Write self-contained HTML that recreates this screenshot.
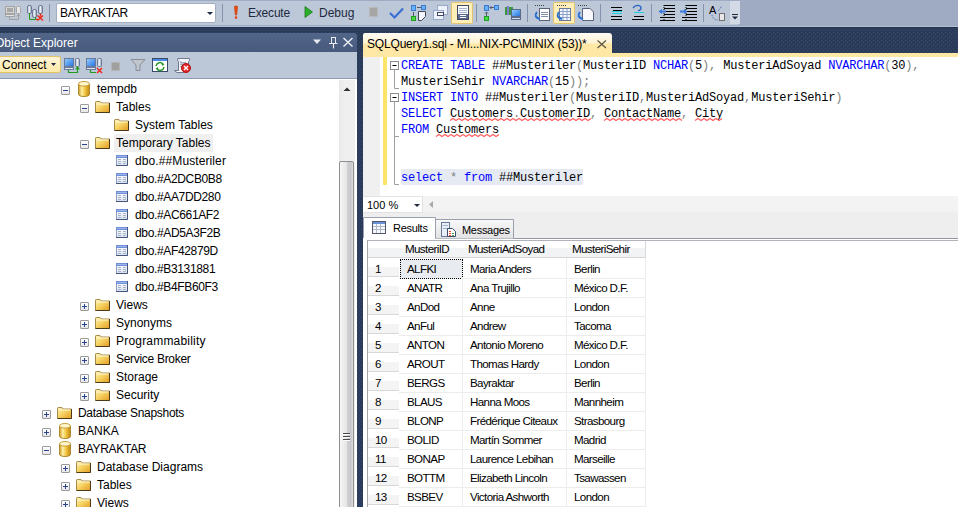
<!DOCTYPE html>
<html><head><meta charset="utf-8">
<style>
*{margin:0;padding:0;box-sizing:border-box}
html,body{width:958px;height:507px;overflow:hidden;background:#2a3b5a;font-family:"Liberation Sans",sans-serif;font-size:12px;color:#000}
.a{position:absolute}
#bg{left:0;top:27px;width:958px;height:480px;background-color:#2a3b5a;border-top:1px solid #23324e}
#tray{left:0;top:0;width:958px;height:27px;background:#9eabc2;border-bottom:1px solid #b3bfd3}
#tb{left:0;top:1px;width:740px;height:24px;background:#bcc7d8;border-radius:0 3px 3px 0}
.sep{position:absolute;width:1px;background:#8592ab;top:4px;height:18px}
.t{position:absolute;white-space:pre;line-height:14px}
/* object explorer */
#oe{left:0;top:52px;width:357px;height:455px;background:#fff}
#oetitle{left:0;top:33px;width:357px;height:19px;background:linear-gradient(#52668a,#475a7c);border-radius:0 3px 0 0;color:#fff}
#oetb{left:0;top:52px;width:357px;height:27px;background:#bcc7d8;border-bottom:1px solid #8e9bb3}
#tree{left:0;top:79px;width:355px;height:428px;background:#fff;overflow:hidden}
.row{position:absolute;height:18px;left:0;width:339px}
.exp{position:absolute;width:9px;height:9px;border:1px solid #9a9a9a;border-radius:1px;background:linear-gradient(#fff,#e6e6e6);top:5px}
.exp i{position:absolute;left:1px;top:3px;width:5px;height:1px;background:#2a4490}
.exp b{position:absolute;left:3px;top:1px;width:1px;height:5px;background:#2a4490}
.lbl{position:absolute;top:0;line-height:18px;white-space:pre}
#sb{left:339px;top:80px;width:16px;height:427px;background:linear-gradient(90deg,#e8e8e8,#f0f0f0 40%,#eeeeee)}
#thumb{left:339px;top:161px;width:15px;height:360px;border:1px solid #8f8f8f;border-radius:2px;background:linear-gradient(90deg,#f6f6f6,#e6e6e6 50%,#d2d2d6 51%,#c8c8cc 85%,#e0e0e0)}
/* document */
#tab{left:363px;top:33px;width:249px;height:20px;border-radius:2px 3px 0 0;background:linear-gradient(#fffcf4 0,#fff3d2 50%,#ffe8a6 55%,#ffe8a6 100%)}
#strip{left:363px;top:53px;width:595px;height:4px;background:#ffe8a6}
#ed{left:363px;top:57px;width:595px;height:139px;background:#fff}
#margin{left:363px;top:57px;width:17px;height:139px;background:#f0f0f0}
#chg{left:383px;top:57px;width:4px;height:128px;background:#ffe566}
.code{position:absolute;left:401px;font-family:"Liberation Mono",monospace;font-size:12px;letter-spacing:-0.2px;line-height:16px;white-space:pre;color:#000}
.k{color:#0000ff}.g{color:#808080}
#zoombar{left:363px;top:196px;width:595px;height:42px;background:linear-gradient(#f4f4f4 0,#f2f2f2 16px,#eeeeee 17px,#eeeeee 100%)}
#res{left:363px;top:238px;width:595px;height:269px;background:#fff}
.hdr{background:linear-gradient(#ffffff 0,#ffffff 7px,#f2f3f5 7px,#f2f3f5 16px,#d5d5d5 16px);border-right:1px solid #d8d8d8}
.rh{background:linear-gradient(#ffffff 0,#ffffff 9px,#f4f4f4 9px,#f4f4f4 18px,#d8d8d8 18px)}
.dc{border-right:1px solid #ececec;border-bottom:1px solid #ececec;top:0}
.gt{position:absolute;font-size:11.6px;letter-spacing:-0.62px;line-height:12px;white-space:pre;color:#000}
</style></head><body>
<svg width="0" height="0" style="position:absolute">
<defs>
<linearGradient id="gf" x1="0" y1="0" x2="1" y2="1"><stop offset="0" stop-color="#fff3b8"/><stop offset="0.45" stop-color="#f6d464"/><stop offset="1" stop-color="#e39a22"/></linearGradient>
<linearGradient id="gd" x1="0" y1="0" x2="1" y2="0"><stop offset="0" stop-color="#c9961c"/><stop offset="0.3" stop-color="#fff0a8"/><stop offset="0.6" stop-color="#f0c440"/><stop offset="1" stop-color="#c08810"/></linearGradient>
<linearGradient id="gt" x1="0" y1="0" x2="0" y2="1"><stop offset="0" stop-color="#ffffff"/><stop offset="1" stop-color="#d8e0f0"/></linearGradient>
<symbol id="folder" viewBox="0 0 15 12"><path d="M0.5 11.5V1.2Q0.5 0.5 1.2 0.5H5L6.2 2H14.5V11.5Z" fill="url(#gf)" stroke="#a88a48"/><path d="M14.5 2V11.5H0.5" fill="none" stroke="#4a3a1a"/><path d="M1.5 3H13.5" stroke="#fff8d8"/></symbol>
<symbol id="db" viewBox="0 0 12 16"><path d="M0.5 2.8V13.2C0.5 14.6 3 15.5 6 15.5S11.5 14.6 11.5 13.2V2.8Z" fill="url(#gd)" stroke="#b08a30"/><ellipse cx="6" cy="2.8" rx="5.5" ry="2.3" fill="#fff6cc" stroke="#c8a040"/></symbol>
<symbol id="tbl" viewBox="0 0 12 11"><rect x="0.5" y="0.5" width="11" height="10" fill="url(#gt)" stroke="#8c9cc0"/><rect x="0" y="0" width="12" height="3" fill="#6f90d8"/><rect x="1" y="1" width="10" height="1" fill="#9ab4ec"/><path d="M2 4.5H5M7 4.5H10M2 6.5H5M7 6.5H10M2 8.5H5M7 8.5H10" stroke="#aab4c8"/><path d="M11.5 0V10.5H0" fill="none" stroke="#44547a"/></symbol>
</defs></svg>
<div id="bg" class="a"></div>
<svg class="a" style="left:0;top:28px" width="958" height="479"><defs><pattern id="dots" x="0" y="0" width="4" height="4" patternUnits="userSpaceOnUse"><rect x="1" y="0" width="1" height="1" fill="#3a4c6c"/><rect x="3" y="2" width="1" height="1" fill="#3a4c6c"/></pattern></defs><rect width="958" height="479" fill="url(#dots)"/></svg>
<div id="tray" class="a"></div>
<div id="tb" class="a"></div>
<div class="sep" style="left:49px"></div>
<div class="a" style="left:56px;top:3px;width:160px;height:20px;background:#fff;border:1px solid #a3aec0;border-radius:2px"></div>
<div class="t" style="left:60px;top:6px;letter-spacing:-0.35px">BAYRAKTAR</div>
<div class="sep" style="left:222px"></div>
<div class="t" style="left:248px;top:6px;color:#1e2a40;letter-spacing:-0.2px">Execute</div>
<div class="t" style="left:319px;top:6px;color:#1e2a40">Debug</div>
<div class="sep" style="left:476px"></div>
<div class="sep" style="left:527px"></div>
<div class="sep" style="left:600px"></div>
<div class="sep" style="left:651px"></div>
<div class="sep" style="left:703px"></div>

<!-- Object explorer -->
<div id="oe" class="a"></div>
<div id="oetitle" class="a"><div class="t" style="left:-5px;top:3px;color:#fff">Object Explorer</div></div>
<div id="oetb" class="a"></div>
<div class="a" style="left:0;top:56px;width:61px;height:17px;border:1px solid #e5c365;border-left:none;border-radius:0 3px 3px 0;background:linear-gradient(#fff5d8,#ffe9a8)"></div>
<div class="t" style="left:2px;top:58px">Connect</div>
<div id="tree" class="a"></div>
<div id="sb" class="a"></div>
<div id="thumb" class="a"></div>

<!-- document -->
<div id="tab" class="a"></div>
<div class="t" style="left:367px;top:37px;letter-spacing:-0.18px">SQLQuery1.sql - MI...NIX-PC\MINIX (53))*</div>
<div id="strip" class="a"></div>
<div id="ed" class="a"></div>
<div id="margin" class="a"></div>
<div id="chg" class="a"></div>
<div class="code" style="top:58px"><span class="k">CREATE TABLE</span> ##Musteriler<span class="g">(</span>MusteriID <span class="k">NCHAR</span><span class="g">(</span>5<span class="g">),</span> MusteriAdSoyad <span class="k">NVARCHAR</span><span class="g">(</span>30<span class="g">),</span></div>
<div class="code" style="top:74px">MusteriSehir <span class="k">NVARCHAR</span><span class="g">(</span>15<span class="g">));</span></div>
<div class="code" style="top:90px"><span class="k">INSERT INTO</span> ##Musteriler<span class="g">(</span>MusteriID<span class="g">,</span>MusteriAdSoyad<span class="g">,</span>MusteriSehir<span class="g">)</span></div>
<div class="code" style="top:106px"><span class="k">SELECT</span> Customers<span class="g">.</span>CustomerID<span class="g">,</span> ContactName<span class="g">,</span> City</div>
<div class="code" style="top:122px"><span class="k">FROM</span> Customers</div>
<div class="a" style="left:401px;top:169px;width:182px;height:16px;background:#e6eaf2"></div>
<div class="code" style="top:170px"><span class="k">select</span> <span class="g">*</span> <span class="k">from</span> ##Musteriler</div>
<div id="zoombar" class="a"></div>
<div class="a" style="left:363px;top:196px;width:60px;height:17px;background:#fff;border:1px solid #e2e2e2;border-left:none"></div>
<div class="t" style="left:367px;top:198px;font-size:11px">100 %</div>
<div id="res" class="a"></div>

<svg class="a" style="left:0;top:0" width="745" height="27">
<defs>
<linearGradient id="gcyl" x1="0" y1="0" x2="1" y2="0"><stop offset="0" stop-color="#7a8aa8"/><stop offset="0.4" stop-color="#ffffff"/><stop offset="1" stop-color="#8090b0"/></linearGradient>
<linearGradient id="gscr" x1="0" y1="0" x2="1" y2="1"><stop offset="0" stop-color="#9ad0ff"/><stop offset="1" stop-color="#1f6fe0"/></linearGradient>
<linearGradient id="ggray" x1="0" y1="0" x2="1" y2="1"><stop offset="0" stop-color="#d8d8d8"/><stop offset="1" stop-color="#8a8a8a"/></linearGradient>
</defs>
<!-- 1 connect (disabled) -->
<rect x="5.5" y="6.5" width="9" height="7" fill="#d6d6d6" stroke="#a4a4a4"/>
<rect x="7" y="8" width="6" height="4" fill="#a8a8a8"/>
<rect x="5.5" y="14.5" width="9" height="2" fill="#e4e4e4" stroke="#a4a4a4"/>
<rect x="16.5" y="6.5" width="4" height="7" rx="1" fill="#e8e8e8" stroke="#a4a4a4"/>
<path d="M9.5 17V19.5H18.5V14" fill="none" stroke="#a0a0a0"/>
<path d="M16.5 16.5L18.5 14.5L20.5 16.5" fill="none" stroke="#a0a0a0"/>
<!-- 2 change connection -->
<rect x="27.5" y="5.5" width="4" height="8" rx="1.5" fill="url(#gcyl)" stroke="#6d7c98"/>
<rect x="32.5" y="9.5" width="4" height="8" rx="1.5" fill="url(#gcyl)" stroke="#6d7c98"/>
<rect x="38.5" y="5.5" width="4" height="8" rx="1.5" fill="url(#gcyl)" stroke="#6d7c98"/>
<path d="M29.5 13V19.5H35.5V17" fill="none" stroke="#1f9a1f"/>
<path d="M36 19.5H38M40.5 13.5V16.5M37.5 15.5L43 20.5M43 15.5L37.5 20.5" fill="none" stroke="#f02818" stroke-width="1.4"/>
<!-- 6 execute ! -->
<path d="M234.5 6.5Q236 5.5 237.5 6.5L236.6 15H235.4Z" fill="#f05010" stroke="#c83808" stroke-width="0.8"/>
<circle cx="236" cy="17.6" r="1.3" fill="#e84810"/>
<!-- 8 debug triangle -->
<path d="M305 6.5L312.5 12L305 17.5Z" fill="#2cae2c" stroke="#1a7a1a" stroke-width="0.8"/>
<!-- 10 stop -->
<rect x="369.5" y="7.5" width="8" height="9" fill="#a6a6a6" stroke="#b8b8b8"/>
<!-- 11 check -->
<path d="M390 13L394.5 17.5L403 8.5" fill="none" stroke="#3a6fd4" stroke-width="2.2"/>
<!-- 12 plan -->
<rect x="411.5" y="5.5" width="4" height="5" fill="#6ab0f8" stroke="#3a7ad0"/>
<rect x="421.5" y="5.5" width="4" height="4" fill="#6ab0f8" stroke="#3a7ad0"/>
<rect x="411.5" y="16.5" width="4" height="4" fill="#48d848" stroke="#20a020"/>
<path d="M417 7.5H421M413.5 12V16" stroke="#505a70"/>
<path d="M418.5 11.5H425.5V16.5L421.5 20.5H418.5Z" fill="#f4f6fb" stroke="#404858"/>
<!-- 13 -->
<rect x="437.5" y="5.5" width="10" height="9" fill="#eef2fa" stroke="#98a8c8"/>
<rect x="433.5" y="10.5" width="10" height="9" fill="#eef2fa" stroke="#98a8c8"/>
<rect x="437.5" y="12.5" width="6" height="3" fill="#fff" stroke="#404868"/>
<!-- 14 highlighted -->
<rect x="451.5" y="2.5" width="21" height="21" rx="1" fill="#ffeeb8" stroke="#e3c46c"/>
<rect x="457.5" y="5.5" width="11" height="14" fill="#fbfcff" stroke="#3e4a68"/>
<path d="M459 8.5H467M459 10.5H467M459 12.5H467" stroke="#a8b4cc"/>
<rect x="458" y="14" width="10" height="5" fill="#5a6a8c"/>
<path d="M460 15.5H466M460 17.5H466" stroke="#fff"/>
<!-- 16 -->
<rect x="484.5" y="5.5" width="4" height="5" fill="#6ab0f8" stroke="#3a7ad0"/>
<rect x="494.5" y="5.5" width="4" height="4" fill="#6ab0f8" stroke="#3a7ad0"/>
<rect x="484.5" y="16.5" width="4" height="4" fill="#48d848" stroke="#20a020"/>
<path d="M490 7.5H494M486.5 12V16" stroke="#505a70"/>
<path d="M491.5 6L490 7.5L491.5 9M485 13.5L486.5 12L488 13.5" fill="none" stroke="#505a70"/>
<!-- 17 computer -->
<rect x="505" y="7" width="8" height="8" fill="#3a9a3a"/>
<rect x="507" y="6" width="2" height="9" fill="#8a7ad8"/>
<rect x="511.5" y="9.5" width="9" height="7" fill="url(#gscr)" stroke="#5a6a8a"/>
<rect x="511.5" y="17.5" width="9" height="2" fill="#d8e0f0" stroke="#5a6a8a"/>
<!-- 19 -->
<rect x="539.5" y="8.5" width="10" height="12" fill="#fff" stroke="#5a6478"/>
<path d="M541 12.5H548M541 14.5H548M541 16.5H548" stroke="#8090a8"/>
<path d="M535 5.5H544" stroke="#404040" stroke-dasharray="1 1"/>
<path d="M537 12Q533 17 540 19" fill="none" stroke="#2a70d0" stroke-width="2"/>
<!-- 20 highlighted grid -->
<rect x="553.5" y="2.5" width="21" height="21" rx="1" fill="#ffeeb8" stroke="#e3c46c"/>
<rect x="559.5" y="8.5" width="11" height="12" fill="#f4f8ff" stroke="#6a7a98"/>
<path d="M563 9V20M567 9V20M560 11.5H570M560 14.5H570M560 17.5H570" stroke="#8aa0c8"/>
<path d="M557 5.5H566" stroke="#404040" stroke-dasharray="1 1"/>
<path d="M559 12Q555 17 562 19" fill="none" stroke="#2a70d0" stroke-width="2"/>
<!-- 21 -->
<path d="M582.5 8.5H590L593.5 12V20.5H582.5Z" fill="#f8f8fc" stroke="#5a6478"/>
<path d="M578 5.5H587" stroke="#404040" stroke-dasharray="1 1"/>
<path d="M580 12Q576 17 583 19" fill="none" stroke="#2a70d0" stroke-width="2"/>
<!-- 23 comment -->
<path d="M611 7.5H622M613 10.5H622M613 13.5H622M611 16.5H622M611 19.5H622" stroke="#000"/>
<path d="M612 11.5H622M612 13.5H622" stroke="#20d0e0"/>
<!-- 24 uncomment -->
<path d="M634 16.5H644M632 19.5H644" stroke="#000"/>
<path d="M634 12.5H644" stroke="#20d0e0"/>
<path d="M633 8Q636 4 640 6Q643 9 638 11" fill="none" stroke="#2060c0" stroke-width="1.3"/>
<!-- 26 outdent -->
<path d="M664 5.5H675M664 8.5H675M664 11.5H675M664 14.5H675M660 17.5H675M660 20.5H675" stroke="#000"/>
<path d="M664 5V21" stroke="#000" stroke-dasharray="1 1"/>
<path d="M658.5 11.5L662 9V14Z" fill="#3a78e0"/><path d="M661 11.5H666" stroke="#3a78e0" stroke-width="2"/>
<!-- 27 indent -->
<path d="M686 5.5H697M686 8.5H697M686 11.5H697M686 14.5H697M682 17.5H697M682 20.5H697" stroke="#000"/>
<path d="M686 5V21" stroke="#000" stroke-dasharray="1 1"/>
<path d="M687.5 11.5L684 9V14Z" fill="#3a78e0"/><path d="M680 11.5H685" stroke="#3a78e0" stroke-width="2"/>
<!-- 29 A->B -->
<text x="709" y="14" font-family="Liberation Sans" font-size="11" fill="#000">A</text>
<rect x="719.5" y="13.5" width="5" height="7" fill="#e8e8e8" stroke="#707070"/>
<path d="M712 15Q713 20 718 20M718 11L722 6" fill="none" stroke="#4060a0" stroke-dasharray="1 1"/>
<!-- 30 overflow -->
<rect x="730" y="1" width="10" height="23" fill="#d3dae6"/>
<path d="M732 14.5H738" stroke="#1e2a40"/><path d="M732 16.5H738L735 19.5Z" fill="#1e2a40"/>
<!-- combo arrow -->
<path d="M207 12H213L210 15Z" fill="#1e2a40"/>
</svg>
<svg class="a" style="left:0;top:33px" width="357" height="46">
<!-- title bar icons (y offset 33) -->
<path d="M313 6.5H321L317 11Z" fill="#e6eaf0"/>
<rect x="331.5" y="4.5" width="4" height="6" fill="none" stroke="#e8ecf2"/>
<path d="M329 10.5H337.5M333.5 11V15.5" stroke="#e8ecf2" stroke-width="1.2"/>
<path d="M343.5 5L352.5 13.5M352.5 5L343.5 13.5" stroke="#e8ecf2" stroke-width="1.5"/>
<!-- connect dropdown arrow (y offset 33 → 63) -->
<path d="M51 30H56L53.5 33Z" fill="#1e2a40"/>
<!-- icon a -->
<g transform="translate(64,25)">
<rect x="0.5" y="0.5" width="9" height="8" fill="url(#gscr)" stroke="#6a7a98"/>
<rect x="0.5" y="9.5" width="9" height="2" fill="#e0e6f0" stroke="#6a7a98"/>
<rect x="11.5" y="0.5" width="4" height="8" rx="1" fill="url(#gcyl)" stroke="#6d7c98"/>
<path d="M4.5 12V14.5H13.5V9" fill="none" stroke="#1f9a1f" stroke-width="1.2"/>
<path d="M11.5 11.5L13.5 9L15.5 11.5" fill="none" stroke="#1f9a1f" stroke-width="1.2"/>
</g>
<!-- icon b -->
<g transform="translate(86,25)">
<rect x="0.5" y="0.5" width="9" height="8" fill="url(#gscr)" stroke="#6a7a98"/>
<rect x="0.5" y="9.5" width="9" height="2" fill="#e0e6f0" stroke="#6a7a98"/>
<rect x="11.5" y="0.5" width="4" height="8" rx="1" fill="url(#gcyl)" stroke="#6d7c98"/>
<path d="M4.5 12V14.5H10" fill="none" stroke="#1f9a1f" stroke-width="1.2"/>
<path d="M11 10L16 15M16 10L11 15" stroke="#f02818" stroke-width="1.5"/>
</g>
<!-- stop -->
<rect x="111.5" y="29.5" width="8" height="8" fill="#a0a0a0" stroke="#b4b4b4"/>
<!-- funnel -->
<path d="M131 26.5H145L140 32V37.5H136V32Z" fill="#c0c4cc" stroke="#8a8e98"/>
<!-- refresh -->
<rect x="152.5" y="25.5" width="15" height="13" fill="#fff" stroke="#3a4a6a"/>
<rect x="153" y="26" width="14" height="2" fill="#4a8ae0"/>
<path d="M156 33A4 4 0 0 1 163 31M164 34A4 4 0 0 1 157 36" fill="none" stroke="#2a9a2a" stroke-width="1.6"/>
<path d="M161.5 29.5L164.5 31.5L162 33Z M158.5 37.5L155.5 35.5L158 34Z" fill="#2a9a2a"/>
<!-- script cancel -->
<path d="M177.5 25.5H189.5Q190.5 27 188.5 28.5V34M178.5 25.5Q176 27 178.5 28.5V37.5H174.5Q176 39 177 39.5H184" fill="#f4f6fa" stroke="#707890"/>
<path d="M180 29.5H186M180 31.5H186M180 33.5H184" stroke="#a0a8c0"/>
<circle cx="186" cy="35" r="4.5" fill="#e02828" stroke="#b01010"/>
<path d="M184 33L188 37M188 33L184 37" stroke="#fff" stroke-width="1.4"/>
</svg>
<svg class="a" style="left:363px;top:33px" width="595" height="175">
<!-- tab close (offset x363,y33) -->
<path d="M234.5 7.5L243 15M243 7.5L234.5 15" stroke="#5e5a48" stroke-width="1.3"/>
<!-- outline box 1 at 390..398, 61..69 -->
<rect x="27.5" y="28.5" width="8" height="8" fill="#fff" stroke="#8c8c8c"/>
<path d="M29.5 32.5H33.5" stroke="#000"/>
<path d="M31.5 37V55.5H36" fill="none" stroke="#a0a0a0"/>
<rect x="27.5" y="60.5" width="8" height="8" fill="#fff" stroke="#8c8c8c"/>
<path d="M29.5 64.5H33.5" stroke="#000"/>
<path d="M31.5 69V151.5H36M31.5 103.5H36" fill="none" stroke="#a0a0a0"/>
</svg>
<svg class="a" style="left:0;top:0" width="958" height="200"><path d="M450 120.5L453 118.5L456 120.5L459 118.5L462 120.5L465 118.5L468 120.5L471 118.5L474 120.5L477 118.5L480 120.5L483 118.5L486 120.5L489 118.5L492 120.5L495 118.5L498 120.5L501 118.5L504 120.5L507 118.5L510 120.5L513 118.5L516 120.5L519 118.5L522 120.5L525 118.5L528 120.5L531 118.5L534 120.5L537 118.5L540 120.5L543 118.5L546 120.5L549 118.5L552 120.5L555 118.5L558 120.5L561 118.5L564 120.5L567 118.5L570 120.5L573 118.5L576 120.5L579 118.5L582 120.5L585 118.5L588 120.5L591 118.5 M604 120.5L607 118.5L610 120.5L613 118.5L616 120.5L619 118.5L622 120.5L625 118.5L628 120.5L631 118.5L634 120.5L637 118.5L640 120.5L643 118.5L646 120.5L649 118.5L652 120.5L655 118.5L658 120.5L661 118.5L664 120.5L667 118.5L670 120.5L673 118.5L676 120.5L679 118.5L682 120.5 M695 120.5L698 118.5L701 120.5L704 118.5L707 120.5L710 118.5L713 120.5L716 118.5L719 120.5L722 118.5 M436 136.5L439 134.5L442 136.5L445 134.5L448 136.5L451 134.5L454 136.5L457 134.5L460 136.5L463 134.5L466 136.5L469 134.5L472 136.5L475 134.5L478 136.5L481 134.5L484 136.5L487 134.5L490 136.5L493 134.5L496 136.5L499 134.5" fill="none" stroke="#ff6060" stroke-width="1.2"/></svg>
<div class="a" style="left:0;top:79px;width:339px;height:428px;overflow:hidden"><div class="a" style="left:0;top:-79px;width:339px;height:507px"><div class="exp" style="left:61px;top:86px"><i></i></div>
<svg class="a" style="left:78px;top:81px" width="12" height="16" viewBox="0 0 12 16"><path d="M0.5 2.8V13.2C0.5 14.6 3 15.5 6 15.5S11.5 14.6 11.5 13.2V2.8Z" fill="url(#gd)" stroke="#b08a30"/><ellipse cx="6" cy="2.8" rx="5.5" ry="2.3" fill="#fff6cc" stroke="#c8a040"/></svg>
<div class="lbl" style="left:97px;top:80px">tempdb</div>
<div class="exp" style="left:80px;top:104px"><i></i></div>
<svg class="a" style="left:95px;top:101px" width="15" height="12" viewBox="0 0 15 12"><path d="M0.5 11.5V1.2Q0.5 0.5 1.2 0.5H5L6.2 2H14.5V11.5Z" fill="url(#gf)" stroke="#a88a48"/><path d="M14.5 2V11.5H0.5" fill="none" stroke="#4a3a1a"/><path d="M1.5 3H13.5" stroke="#fff8d8"/></svg>
<div class="lbl" style="left:116px;top:98px">Tables</div>
<svg class="a" style="left:114px;top:119px" width="15" height="12" viewBox="0 0 15 12"><path d="M0.5 11.5V1.2Q0.5 0.5 1.2 0.5H5L6.2 2H14.5V11.5Z" fill="url(#gf)" stroke="#a88a48"/><path d="M14.5 2V11.5H0.5" fill="none" stroke="#4a3a1a"/><path d="M1.5 3H13.5" stroke="#fff8d8"/></svg>
<div class="lbl" style="left:135px;top:116px">System Tables</div>
<div class="a" style="left:114px;top:134px;width:99px;height:18px;background:#efefef"></div>
<div class="exp" style="left:80px;top:140px"><i></i></div>
<svg class="a" style="left:95px;top:137px" width="15" height="12" viewBox="0 0 15 12"><path d="M0.5 11.5V1.2Q0.5 0.5 1.2 0.5H5L6.2 2H14.5V11.5Z" fill="url(#gf)" stroke="#a88a48"/><path d="M14.5 2V11.5H0.5" fill="none" stroke="#4a3a1a"/><path d="M1.5 3H13.5" stroke="#fff8d8"/></svg>
<div class="lbl" style="left:116px;top:134px">Temporary Tables</div>
<svg class="a" style="left:116px;top:155px" width="12" height="11" viewBox="0 0 12 11"><rect x="0.5" y="0.5" width="11" height="10" fill="url(#gt)" stroke="#8c9cc0"/><rect x="0" y="0" width="12" height="3" fill="#6f90d8"/><rect x="1" y="1" width="10" height="1" fill="#9ab4ec"/><path d="M2 4.5H5M7 4.5H10M2 6.5H5M7 6.5H10M2 8.5H5M7 8.5H10" stroke="#aab4c8"/><path d="M11.5 0V10.5H0" fill="none" stroke="#44547a"/></svg>
<div class="lbl" style="left:135px;top:152px;letter-spacing:0.1px">dbo.##Musteriler</div>
<svg class="a" style="left:116px;top:173px" width="12" height="11" viewBox="0 0 12 11"><rect x="0.5" y="0.5" width="11" height="10" fill="url(#gt)" stroke="#8c9cc0"/><rect x="0" y="0" width="12" height="3" fill="#6f90d8"/><rect x="1" y="1" width="10" height="1" fill="#9ab4ec"/><path d="M2 4.5H5M7 4.5H10M2 6.5H5M7 6.5H10M2 8.5H5M7 8.5H10" stroke="#aab4c8"/><path d="M11.5 0V10.5H0" fill="none" stroke="#44547a"/></svg>
<div class="lbl" style="left:135px;top:170px;letter-spacing:-0.35px">dbo.#A2DCB0B8</div>
<svg class="a" style="left:116px;top:191px" width="12" height="11" viewBox="0 0 12 11"><rect x="0.5" y="0.5" width="11" height="10" fill="url(#gt)" stroke="#8c9cc0"/><rect x="0" y="0" width="12" height="3" fill="#6f90d8"/><rect x="1" y="1" width="10" height="1" fill="#9ab4ec"/><path d="M2 4.5H5M7 4.5H10M2 6.5H5M7 6.5H10M2 8.5H5M7 8.5H10" stroke="#aab4c8"/><path d="M11.5 0V10.5H0" fill="none" stroke="#44547a"/></svg>
<div class="lbl" style="left:135px;top:188px;letter-spacing:-0.35px">dbo.#AA7DD280</div>
<svg class="a" style="left:116px;top:209px" width="12" height="11" viewBox="0 0 12 11"><rect x="0.5" y="0.5" width="11" height="10" fill="url(#gt)" stroke="#8c9cc0"/><rect x="0" y="0" width="12" height="3" fill="#6f90d8"/><rect x="1" y="1" width="10" height="1" fill="#9ab4ec"/><path d="M2 4.5H5M7 4.5H10M2 6.5H5M7 6.5H10M2 8.5H5M7 8.5H10" stroke="#aab4c8"/><path d="M11.5 0V10.5H0" fill="none" stroke="#44547a"/></svg>
<div class="lbl" style="left:135px;top:206px;letter-spacing:-0.35px">dbo.#AC661AF2</div>
<svg class="a" style="left:116px;top:227px" width="12" height="11" viewBox="0 0 12 11"><rect x="0.5" y="0.5" width="11" height="10" fill="url(#gt)" stroke="#8c9cc0"/><rect x="0" y="0" width="12" height="3" fill="#6f90d8"/><rect x="1" y="1" width="10" height="1" fill="#9ab4ec"/><path d="M2 4.5H5M7 4.5H10M2 6.5H5M7 6.5H10M2 8.5H5M7 8.5H10" stroke="#aab4c8"/><path d="M11.5 0V10.5H0" fill="none" stroke="#44547a"/></svg>
<div class="lbl" style="left:135px;top:224px;letter-spacing:-0.35px">dbo.#AD5A3F2B</div>
<svg class="a" style="left:116px;top:245px" width="12" height="11" viewBox="0 0 12 11"><rect x="0.5" y="0.5" width="11" height="10" fill="url(#gt)" stroke="#8c9cc0"/><rect x="0" y="0" width="12" height="3" fill="#6f90d8"/><rect x="1" y="1" width="10" height="1" fill="#9ab4ec"/><path d="M2 4.5H5M7 4.5H10M2 6.5H5M7 6.5H10M2 8.5H5M7 8.5H10" stroke="#aab4c8"/><path d="M11.5 0V10.5H0" fill="none" stroke="#44547a"/></svg>
<div class="lbl" style="left:135px;top:242px;letter-spacing:-0.35px">dbo.#AF42879D</div>
<svg class="a" style="left:116px;top:263px" width="12" height="11" viewBox="0 0 12 11"><rect x="0.5" y="0.5" width="11" height="10" fill="url(#gt)" stroke="#8c9cc0"/><rect x="0" y="0" width="12" height="3" fill="#6f90d8"/><rect x="1" y="1" width="10" height="1" fill="#9ab4ec"/><path d="M2 4.5H5M7 4.5H10M2 6.5H5M7 6.5H10M2 8.5H5M7 8.5H10" stroke="#aab4c8"/><path d="M11.5 0V10.5H0" fill="none" stroke="#44547a"/></svg>
<div class="lbl" style="left:135px;top:260px;letter-spacing:-0.35px">dbo.#B3131881</div>
<svg class="a" style="left:116px;top:281px" width="12" height="11" viewBox="0 0 12 11"><rect x="0.5" y="0.5" width="11" height="10" fill="url(#gt)" stroke="#8c9cc0"/><rect x="0" y="0" width="12" height="3" fill="#6f90d8"/><rect x="1" y="1" width="10" height="1" fill="#9ab4ec"/><path d="M2 4.5H5M7 4.5H10M2 6.5H5M7 6.5H10M2 8.5H5M7 8.5H10" stroke="#aab4c8"/><path d="M11.5 0V10.5H0" fill="none" stroke="#44547a"/></svg>
<div class="lbl" style="left:135px;top:278px;letter-spacing:-0.35px">dbo.#B4FB60F3</div>
<div class="exp" style="left:80px;top:302px"><i></i><b></b></div>
<svg class="a" style="left:95px;top:299px" width="15" height="12" viewBox="0 0 15 12"><path d="M0.5 11.5V1.2Q0.5 0.5 1.2 0.5H5L6.2 2H14.5V11.5Z" fill="url(#gf)" stroke="#a88a48"/><path d="M14.5 2V11.5H0.5" fill="none" stroke="#4a3a1a"/><path d="M1.5 3H13.5" stroke="#fff8d8"/></svg>
<div class="lbl" style="left:116px;top:296px">Views</div>
<div class="exp" style="left:80px;top:320px"><i></i><b></b></div>
<svg class="a" style="left:95px;top:317px" width="15" height="12" viewBox="0 0 15 12"><path d="M0.5 11.5V1.2Q0.5 0.5 1.2 0.5H5L6.2 2H14.5V11.5Z" fill="url(#gf)" stroke="#a88a48"/><path d="M14.5 2V11.5H0.5" fill="none" stroke="#4a3a1a"/><path d="M1.5 3H13.5" stroke="#fff8d8"/></svg>
<div class="lbl" style="left:116px;top:314px">Synonyms</div>
<div class="exp" style="left:80px;top:338px"><i></i><b></b></div>
<svg class="a" style="left:95px;top:335px" width="15" height="12" viewBox="0 0 15 12"><path d="M0.5 11.5V1.2Q0.5 0.5 1.2 0.5H5L6.2 2H14.5V11.5Z" fill="url(#gf)" stroke="#a88a48"/><path d="M14.5 2V11.5H0.5" fill="none" stroke="#4a3a1a"/><path d="M1.5 3H13.5" stroke="#fff8d8"/></svg>
<div class="lbl" style="left:116px;top:332px;letter-spacing:0.2px">Programmability</div>
<div class="exp" style="left:80px;top:356px"><i></i><b></b></div>
<svg class="a" style="left:95px;top:353px" width="15" height="12" viewBox="0 0 15 12"><path d="M0.5 11.5V1.2Q0.5 0.5 1.2 0.5H5L6.2 2H14.5V11.5Z" fill="url(#gf)" stroke="#a88a48"/><path d="M14.5 2V11.5H0.5" fill="none" stroke="#4a3a1a"/><path d="M1.5 3H13.5" stroke="#fff8d8"/></svg>
<div class="lbl" style="left:116px;top:350px;letter-spacing:-0.3px">Service Broker</div>
<div class="exp" style="left:80px;top:374px"><i></i><b></b></div>
<svg class="a" style="left:95px;top:371px" width="15" height="12" viewBox="0 0 15 12"><path d="M0.5 11.5V1.2Q0.5 0.5 1.2 0.5H5L6.2 2H14.5V11.5Z" fill="url(#gf)" stroke="#a88a48"/><path d="M14.5 2V11.5H0.5" fill="none" stroke="#4a3a1a"/><path d="M1.5 3H13.5" stroke="#fff8d8"/></svg>
<div class="lbl" style="left:116px;top:368px">Storage</div>
<div class="exp" style="left:80px;top:392px"><i></i><b></b></div>
<svg class="a" style="left:95px;top:389px" width="15" height="12" viewBox="0 0 15 12"><path d="M0.5 11.5V1.2Q0.5 0.5 1.2 0.5H5L6.2 2H14.5V11.5Z" fill="url(#gf)" stroke="#a88a48"/><path d="M14.5 2V11.5H0.5" fill="none" stroke="#4a3a1a"/><path d="M1.5 3H13.5" stroke="#fff8d8"/></svg>
<div class="lbl" style="left:116px;top:386px">Security</div>
<div class="exp" style="left:42px;top:410px"><i></i><b></b></div>
<svg class="a" style="left:57px;top:407px" width="15" height="12" viewBox="0 0 15 12"><path d="M0.5 11.5V1.2Q0.5 0.5 1.2 0.5H5L6.2 2H14.5V11.5Z" fill="url(#gf)" stroke="#a88a48"/><path d="M14.5 2V11.5H0.5" fill="none" stroke="#4a3a1a"/><path d="M1.5 3H13.5" stroke="#fff8d8"/></svg>
<div class="lbl" style="left:78px;top:404px;letter-spacing:-0.3px">Database Snapshots</div>
<div class="exp" style="left:42px;top:428px"><i></i><b></b></div>
<svg class="a" style="left:59px;top:423px" width="12" height="16" viewBox="0 0 12 16"><path d="M0.5 2.8V13.2C0.5 14.6 3 15.5 6 15.5S11.5 14.6 11.5 13.2V2.8Z" fill="url(#gd)" stroke="#b08a30"/><ellipse cx="6" cy="2.8" rx="5.5" ry="2.3" fill="#fff6cc" stroke="#c8a040"/></svg>
<div class="lbl" style="left:78px;top:422px">BANKA</div>
<div class="exp" style="left:42px;top:446px"><i></i></div>
<svg class="a" style="left:59px;top:441px" width="12" height="16" viewBox="0 0 12 16"><path d="M0.5 2.8V13.2C0.5 14.6 3 15.5 6 15.5S11.5 14.6 11.5 13.2V2.8Z" fill="url(#gd)" stroke="#b08a30"/><ellipse cx="6" cy="2.8" rx="5.5" ry="2.3" fill="#fff6cc" stroke="#c8a040"/></svg>
<div class="lbl" style="left:78px;top:440px;letter-spacing:-0.3px">BAYRAKTAR</div>
<div class="exp" style="left:61px;top:464px"><i></i><b></b></div>
<svg class="a" style="left:76px;top:461px" width="15" height="12" viewBox="0 0 15 12"><path d="M0.5 11.5V1.2Q0.5 0.5 1.2 0.5H5L6.2 2H14.5V11.5Z" fill="url(#gf)" stroke="#a88a48"/><path d="M14.5 2V11.5H0.5" fill="none" stroke="#4a3a1a"/><path d="M1.5 3H13.5" stroke="#fff8d8"/></svg>
<div class="lbl" style="left:97px;top:458px">Database Diagrams</div>
<div class="exp" style="left:61px;top:482px"><i></i><b></b></div>
<svg class="a" style="left:76px;top:479px" width="15" height="12" viewBox="0 0 15 12"><path d="M0.5 11.5V1.2Q0.5 0.5 1.2 0.5H5L6.2 2H14.5V11.5Z" fill="url(#gf)" stroke="#a88a48"/><path d="M14.5 2V11.5H0.5" fill="none" stroke="#4a3a1a"/><path d="M1.5 3H13.5" stroke="#fff8d8"/></svg>
<div class="lbl" style="left:97px;top:476px">Tables</div>
<div class="exp" style="left:61px;top:500px"><i></i><b></b></div>
<svg class="a" style="left:76px;top:497px" width="15" height="12" viewBox="0 0 15 12"><path d="M0.5 11.5V1.2Q0.5 0.5 1.2 0.5H5L6.2 2H14.5V11.5Z" fill="url(#gf)" stroke="#a88a48"/><path d="M14.5 2V11.5H0.5" fill="none" stroke="#4a3a1a"/><path d="M1.5 3H13.5" stroke="#fff8d8"/></svg>
<div class="lbl" style="left:97px;top:494px">Views</div></div></div><div class="a" style="left:363px;top:238px;width:595px;height:269px;overflow:hidden"><div class="a" style="left:-363px;top:-238px;width:958px;height:507px"><div class="a" style="left:367px;top:240px;width:591px;height:267px;border-top:1px solid #b0b3ba;border-left:1px solid #a8a8a8;background:#fff"></div>
<div class="a" style="left:435px;top:238px;width:523px;height:1px;background:#9297a3"></div>
<div class="a hdr" style="left:368px;top:241px;width:32px;height:17px"></div>
<div class="a hdr" style="left:399px;top:241px;width:64px;height:17px"></div>
<div class="a hdr" style="left:462px;top:241px;width:105px;height:17px"></div>
<div class="a hdr" style="left:566px;top:241px;width:80px;height:17px"></div>
<div class="gt" style="left:405px;top:243px">MusteriID</div>
<div class="gt" style="left:468px;top:243px">MusteriAdSoyad</div>
<div class="gt" style="left:572px;top:243px">MusteriSehir</div>
<div class="a rh" style="left:368px;top:258px;width:31px;height:19px"></div>
<div class="a dc" style="left:399px;top:258px;width:64px;height:21px"></div>
<div class="a dc" style="left:462px;top:258px;width:105px;height:21px"></div>
<div class="a dc" style="left:566px;top:258px;width:80px;height:21px"></div>
<div class="a" style="left:400px;top:259px;width:63px;height:20px;background:#e8ebf0;border:1px dotted #000"></div>
<div class="gt" style="left:375px;top:263px">1</div>
<div class="gt" style="left:407px;top:263px">ALFKI</div>
<div class="gt" style="left:470px;top:263px">Maria Anders</div>
<div class="gt" style="left:574px;top:263px">Berlin</div>
<div class="a rh" style="left:368px;top:277px;width:31px;height:19px"></div>
<div class="a dc" style="left:399px;top:277px;width:64px;height:21px"></div>
<div class="a dc" style="left:462px;top:277px;width:105px;height:21px"></div>
<div class="a dc" style="left:566px;top:277px;width:80px;height:21px"></div>
<div class="gt" style="left:375px;top:282px">2</div>
<div class="gt" style="left:407px;top:282px">ANATR</div>
<div class="gt" style="left:470px;top:282px">Ana Trujillo</div>
<div class="gt" style="left:574px;top:282px">México D.F.</div>
<div class="a rh" style="left:368px;top:296px;width:31px;height:19px"></div>
<div class="a dc" style="left:399px;top:296px;width:64px;height:21px"></div>
<div class="a dc" style="left:462px;top:296px;width:105px;height:21px"></div>
<div class="a dc" style="left:566px;top:296px;width:80px;height:21px"></div>
<div class="gt" style="left:375px;top:301px">3</div>
<div class="gt" style="left:407px;top:301px">AnDod</div>
<div class="gt" style="left:470px;top:301px">Anne</div>
<div class="gt" style="left:574px;top:301px">London</div>
<div class="a rh" style="left:368px;top:315px;width:31px;height:19px"></div>
<div class="a dc" style="left:399px;top:315px;width:64px;height:21px"></div>
<div class="a dc" style="left:462px;top:315px;width:105px;height:21px"></div>
<div class="a dc" style="left:566px;top:315px;width:80px;height:21px"></div>
<div class="gt" style="left:375px;top:320px">4</div>
<div class="gt" style="left:407px;top:320px">AnFul</div>
<div class="gt" style="left:470px;top:320px">Andrew</div>
<div class="gt" style="left:574px;top:320px">Tacoma</div>
<div class="a rh" style="left:368px;top:334px;width:31px;height:19px"></div>
<div class="a dc" style="left:399px;top:334px;width:64px;height:21px"></div>
<div class="a dc" style="left:462px;top:334px;width:105px;height:21px"></div>
<div class="a dc" style="left:566px;top:334px;width:80px;height:21px"></div>
<div class="gt" style="left:375px;top:339px">5</div>
<div class="gt" style="left:407px;top:339px">ANTON</div>
<div class="gt" style="left:470px;top:339px">Antonio Moreno</div>
<div class="gt" style="left:574px;top:339px">México D.F.</div>
<div class="a rh" style="left:368px;top:353px;width:31px;height:19px"></div>
<div class="a dc" style="left:399px;top:353px;width:64px;height:21px"></div>
<div class="a dc" style="left:462px;top:353px;width:105px;height:21px"></div>
<div class="a dc" style="left:566px;top:353px;width:80px;height:21px"></div>
<div class="gt" style="left:375px;top:358px">6</div>
<div class="gt" style="left:407px;top:358px">AROUT</div>
<div class="gt" style="left:470px;top:358px">Thomas Hardy</div>
<div class="gt" style="left:574px;top:358px">London</div>
<div class="a rh" style="left:368px;top:372px;width:31px;height:19px"></div>
<div class="a dc" style="left:399px;top:372px;width:64px;height:21px"></div>
<div class="a dc" style="left:462px;top:372px;width:105px;height:21px"></div>
<div class="a dc" style="left:566px;top:372px;width:80px;height:21px"></div>
<div class="gt" style="left:375px;top:377px">7</div>
<div class="gt" style="left:407px;top:377px">BERGS</div>
<div class="gt" style="left:470px;top:377px">Bayraktar</div>
<div class="gt" style="left:574px;top:377px">Berlin</div>
<div class="a rh" style="left:368px;top:391px;width:31px;height:19px"></div>
<div class="a dc" style="left:399px;top:391px;width:64px;height:21px"></div>
<div class="a dc" style="left:462px;top:391px;width:105px;height:21px"></div>
<div class="a dc" style="left:566px;top:391px;width:80px;height:21px"></div>
<div class="gt" style="left:375px;top:396px">8</div>
<div class="gt" style="left:407px;top:396px">BLAUS</div>
<div class="gt" style="left:470px;top:396px">Hanna Moos</div>
<div class="gt" style="left:574px;top:396px">Mannheim</div>
<div class="a rh" style="left:368px;top:410px;width:31px;height:19px"></div>
<div class="a dc" style="left:399px;top:410px;width:64px;height:21px"></div>
<div class="a dc" style="left:462px;top:410px;width:105px;height:21px"></div>
<div class="a dc" style="left:566px;top:410px;width:80px;height:21px"></div>
<div class="gt" style="left:375px;top:415px">9</div>
<div class="gt" style="left:407px;top:415px">BLONP</div>
<div class="gt" style="left:470px;top:415px">Frédérique Citeaux</div>
<div class="gt" style="left:574px;top:415px">Strasbourg</div>
<div class="a rh" style="left:368px;top:429px;width:31px;height:19px"></div>
<div class="a dc" style="left:399px;top:429px;width:64px;height:21px"></div>
<div class="a dc" style="left:462px;top:429px;width:105px;height:21px"></div>
<div class="a dc" style="left:566px;top:429px;width:80px;height:21px"></div>
<div class="gt" style="left:375px;top:434px">10</div>
<div class="gt" style="left:407px;top:434px">BOLID</div>
<div class="gt" style="left:470px;top:434px">Martín Sommer</div>
<div class="gt" style="left:574px;top:434px">Madrid</div>
<div class="a rh" style="left:368px;top:448px;width:31px;height:19px"></div>
<div class="a dc" style="left:399px;top:448px;width:64px;height:21px"></div>
<div class="a dc" style="left:462px;top:448px;width:105px;height:21px"></div>
<div class="a dc" style="left:566px;top:448px;width:80px;height:21px"></div>
<div class="gt" style="left:375px;top:453px">11</div>
<div class="gt" style="left:407px;top:453px">BONAP</div>
<div class="gt" style="left:470px;top:453px">Laurence Lebihan</div>
<div class="gt" style="left:574px;top:453px">Marseille</div>
<div class="a rh" style="left:368px;top:467px;width:31px;height:19px"></div>
<div class="a dc" style="left:399px;top:467px;width:64px;height:21px"></div>
<div class="a dc" style="left:462px;top:467px;width:105px;height:21px"></div>
<div class="a dc" style="left:566px;top:467px;width:80px;height:21px"></div>
<div class="gt" style="left:375px;top:472px">12</div>
<div class="gt" style="left:407px;top:472px">BOTTM</div>
<div class="gt" style="left:470px;top:472px">Elizabeth Lincoln</div>
<div class="gt" style="left:574px;top:472px">Tsawassen</div>
<div class="a rh" style="left:368px;top:486px;width:31px;height:19px"></div>
<div class="a dc" style="left:399px;top:486px;width:64px;height:21px"></div>
<div class="a dc" style="left:462px;top:486px;width:105px;height:21px"></div>
<div class="a dc" style="left:566px;top:486px;width:80px;height:21px"></div>
<div class="gt" style="left:375px;top:491px">13</div>
<div class="gt" style="left:407px;top:491px">BSBEV</div>
<div class="gt" style="left:470px;top:491px">Victoria Ashworth</div>
<div class="gt" style="left:574px;top:491px">London</div>
<div class="a rh" style="left:368px;top:505px;width:31px;height:19px"></div>
<div class="a dc" style="left:399px;top:505px;width:64px;height:21px"></div>
<div class="a dc" style="left:462px;top:505px;width:105px;height:21px"></div>
<div class="a dc" style="left:566px;top:505px;width:80px;height:21px"></div>
<div class="gt" style="left:375px;top:510px">14</div>
<div class="gt" style="left:407px;top:510px">CACTU</div>
<div class="gt" style="left:470px;top:510px">Patricio Simpson</div>
<div class="gt" style="left:574px;top:510px">Buenos Aires</div></div></div><svg class="a" style="left:363px;top:196px" width="595" height="44">
<defs>
<linearGradient id="gmsg" x1="0" y1="0" x2="0" y2="1"><stop offset="0" stop-color="#f8f8f8"/><stop offset="1" stop-color="#e2e2e4"/></linearGradient>
</defs>
<!-- zoom combo arrow (offset 363,196) -->
<path d="M51 8H57L54 11Z" fill="#1e2a40"/>
<!-- left scroll arrow -->
<path d="M70 5L66 8.5L70 12Z" fill="#a8a8a8"/>
<!-- results tab -->
<rect x="0.5" y="22" width="72" height="21" fill="#fff"/>
<path d="M0.5 42V21.5H72.5V42" fill="none" stroke="#9aa0ac"/>
<!-- messages tab -->
<path d="M72.5 42.5V23.5H150.5V42.5" fill="url(#gmsg)" stroke="#9aa0ac"/>
<!-- results icon -->
<rect x="9.5" y="25.5" width="13" height="12" fill="#f6f8fc" stroke="#50586a"/>
<rect x="10" y="26" width="12" height="2" fill="#6a90d8"/>
<path d="M13.5 28V37M17.5 28V37M10 30.5H22M10 33.5H22" stroke="#b0b8c8"/>
<!-- messages icon -->
<rect x="78.5" y="26.5" width="8" height="14" fill="#e8eef8" stroke="#6a7898"/>
<path d="M80 29.5H85M80 32.5H85" stroke="#a0b0d0"/>
<path d="M84.5 32.5H89.5L92.5 35.5V40.5H84.5Z" fill="#fff" stroke="#3e4a6a"/>
<path d="M86 35.5H88M86 37.5H88M86 39.5H88" stroke="#f04020"/>
<path d="M89 37.5H91M89 39.5H91" stroke="#40a040"/>
</svg>
<div class="t" style="left:393px;top:221px;font-size:11px;letter-spacing:-0.3px">Results</div>
<div class="t" style="left:462px;top:223px;font-size:11px;letter-spacing:-0.3px">Messages</div>
<!-- OE scrollbar arrow -->
<svg class="a" style="left:339px;top:80px" width="16" height="16"><path d="M4.5 11L8 7.5L11.5 11Z" fill="#303030"/></svg>
<svg class="a" style="left:339px;top:430px" width="16" height="14"><path d="M4 3.5H11M4 6.5H11M4 9.5H11" stroke="#4a4a4a"/><path d="M4 4.5H11M4 7.5H11M4 10.5H11" stroke="#fbfbfb"/></svg>

</body></html>
